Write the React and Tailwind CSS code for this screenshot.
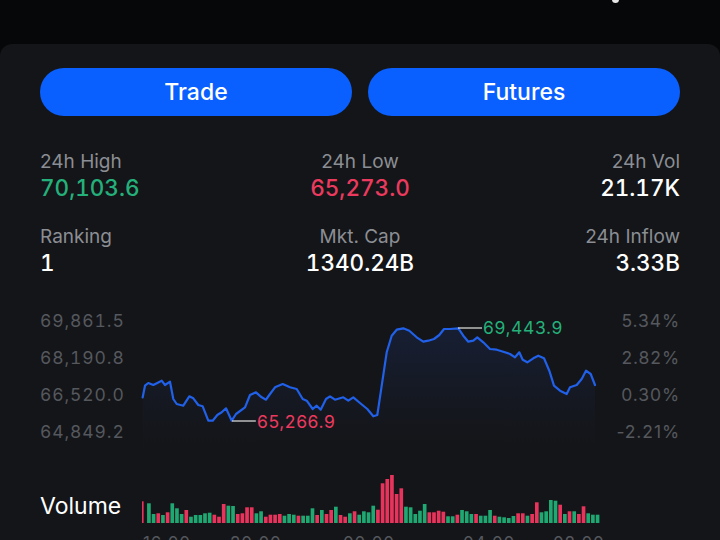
import React from "react";

const LINE = [
  [142.7, 398.3], [145, 386.7], [148.3, 384], [153.3, 386], [157.3, 384], [161.7, 381.7],
  [165, 386], [170, 382.7], [173.3, 400], [176.7, 405], [183.3, 406.7], [189.3, 397.3],
  [193.3, 399.3], [198.3, 406], [202.7, 407.3], [208.3, 421.7], [212.7, 421.7], [217.3, 416],
  [221.7, 413.3], [226, 409.3], [231.7, 421.7], [236, 415], [245, 408.3], [250, 396],
  [256, 393.3], [261.7, 398.3], [266, 400.7], [269.3, 396], [275, 388.3], [282.7, 385],
  [290, 388.3], [296.7, 390], [302.7, 400], [306.7, 401.7], [312.7, 410], [316.7, 406.7],
  [320.7, 410.7], [326, 400], [330, 397.3], [335, 400.7], [343.3, 398.3], [348.3, 401.7],
  [353.3, 398.3], [360, 404], [367.3, 410], [373.3, 417.3], [377.3, 416], [380.7, 393.3],
  [386.7, 353.3], [391.7, 336.7], [396.7, 330.7], [403.3, 329.3], [409.3, 331.7], [416.7, 338.3],
  [423.3, 342.7], [428.3, 341.7], [434, 340], [439.3, 336], [444, 330], [450, 330],
  [458.3, 329.3], [463.3, 336.7], [468.3, 342.7], [473.3, 341.7], [477.3, 338.3], [483.3, 343.3],
  [490, 350], [496.7, 350.7], [503.3, 352.7], [510, 355], [515, 358.3], [519.3, 353.3],
  [522.7, 360.7], [527.3, 363.3], [533.3, 359.3], [538.3, 356.7], [544, 359.3], [549.3, 371.7],
  [554, 386.7], [560, 391.7], [566.7, 395], [570, 388.3], [576.7, 386], [581.7, 380],
  [586, 371.7], [590.7, 375], [595, 386],
];

const VOL = "r21.7 g19.7 g9 r9.7 g8 r10.7 g19.7 g14.7 g9 r13 g6.3 g8 g8 g9.7 g10.3 r8.3 r6.3 r19 g17.3 g17 r9 r9.7 r15.7 r15.7 g9.7 g11.7 r6.3 r8.3 r8.3 r9 g7.3 g9 g8.3 r7.3 g7.3 g7.3 g14.7 r8 g13 r9 r13 g16.3 r8 r6.3 g9.7 r11.7 g8.3 g11.7 g10.7 g17.3 r13.3 r39.7 r44 r48 r29 r34.7 g16.3 g15.7 g9 g12.3 g19 r10.7 r10.7 r12.3 r11.3 g6.7 g6.7 r8.3 g13 g11.7 g9 r9 g7.3 g7.3 g13 r7.3 g6.3 g5.7 g5 g7 r9.7 r9.7 g7.3 r9 r20.7 g10.7 g11.7 g23 g22.3 r18.3 g9 r11.7 g11.7 r9 r16.7 g9.7 g8.3 g8.3"
  .split(" ")
  .map((s) => ({ c: s[0], h: parseFloat(s.slice(1)) }));

function Stat({ label, value, color, align }) {
  return (
    <div className={"flex flex-col " + align}>
      <span className="text-[19px] leading-[25px] text-[#8b8e94]">{label}</span>
      <span className={"text-[22.5px] leading-[28px] font-medium tabular-nums " + color}>{value}</span>
    </div>
  );
}

export default function App() {
  const line = LINE.map((p, i) => (i ? "L" : "M") + p[0] + " " + p[1]).join(" ");
  const area = line + " L595 450 L142.7 450 Z";
  const pitch = 458 / VOL.length;

  return (
    <div
      className="w-[720px] h-[540px] bg-[#060708] overflow-hidden flex flex-col relative"
      style={{ fontFamily: "Inter, 'Noto Sans', sans-serif" }}
    >
      <div className="h-[44px] shrink-0 relative">
        <div className="absolute left-[612px] top-[-4px] w-[7px] h-[7px] rounded-full bg-white/90" />
      </div>
      <div className="flex-1 bg-[#141518] rounded-t-[12px] px-10 pt-6 flex flex-col">
        <div className="flex gap-4">
          <button className="flex-1 h-12 rounded-full bg-[#0a60ff] text-white text-[23px] font-medium">Trade</button>
          <button className="flex-1 h-12 rounded-full bg-[#0a60ff] text-white text-[23px] font-medium">Futures</button>
        </div>

        <div className="grid grid-cols-3 mt-[33px] gap-y-[22px]">
          <Stat label="24h High" value="70,103.6" color="text-[#24b07a]" align="items-start" />
          <Stat label="24h Low" value="65,273.0" color="text-[#ec3a5f]" align="items-center" />
          <Stat label="24h Vol" value="21.17K" color="text-white" align="items-end" />
          <Stat label="Ranking" value="1" color="text-white" align="items-start" />
          <Stat label="Mkt. Cap" value="1340.24B" color="text-white" align="items-center" />
          <Stat label="24h Inflow" value="3.33B" color="text-white" align="items-end" />
        </div>

        <div className="flex mt-[25px] h-[150px] text-[17.5px] leading-[37px] text-[#55585e] tracking-[0.9px]">
          <div className="w-[102px] flex flex-col tabular-nums">
            <span>69,861.5</span>
            <span>68,190.8</span>
            <span>66,520.0</span>
            <span>64,849.2</span>
          </div>
          <svg width="458" height="150" viewBox="142 303 458 150" className="shrink-0 overflow-visible">
            <defs>
              <linearGradient id="fill" x1="0" y1="0" x2="0" y2="1">
                <stop offset="0" stopColor="#1f3a80" stopOpacity="0.26" />
                <stop offset="0.7" stopColor="#1f3a80" stopOpacity="0.06" />
                <stop offset="1" stopColor="#1f3a80" stopOpacity="0" />
              </linearGradient>
            </defs>
            <path d={area} fill="url(#fill)" />
            <path d={line} fill="none" stroke="#2160e8" strokeWidth="2.2" strokeLinejoin="round" strokeLinecap="round" />
            <line x1="232" y1="422" x2="256" y2="422" stroke="#e5e5e5" strokeWidth="1.2" />
            <text x="257" y="422" dominantBaseline="central" fill="#ec3a5f" fontSize="17.5" letterSpacing="0.6">65,266.9</text>
            <line x1="458" y1="329" x2="482" y2="329" stroke="#e5e5e5" strokeWidth="1.2" />
            <text x="483" y="328" dominantBaseline="central" fill="#24b07a" fontSize="17.5" letterSpacing="0.6">69,443.9</text>
          </svg>
          <div className="flex-1 flex flex-col items-end">
            <span>5.34%</span>
            <span>2.82%</span>
            <span>0.30%</span>
            <span>-2.21%</span>
          </div>
        </div>

        <div className="flex items-end mt-[21px] h-[50px]">
          <span className="w-[102px] text-[23px] leading-[28px] text-white pb-[3px]">Volume</span>
          <svg width="458" height="50" viewBox="0 0 458 50" className="shrink-0">
            {VOL.map((b, i) => (
              <rect
                key={i}
                x={i * pitch + (i === 0 ? 0 : 0.4)}
                y={50 - b.h}
                width={i === 0 ? 1.6 : pitch - 1}
                height={b.h}
                fill={b.c === "g" ? "#1fa872" : "#e8345c"}
              />
            ))}
          </svg>
        </div>

        <div className="relative h-[24px] mt-[8px] text-[17px] leading-[24px] text-[#55585e] tracking-[0.8px]">
          <span className="absolute left-[103px]">16:00</span>
          <span className="absolute left-[190px]">20:00</span>
          <span className="absolute left-[303px]">00:00</span>
          <span className="absolute left-[423px]">04:00</span>
          <span className="absolute left-[513px]">08:00</span>
        </div>
      </div>
    </div>
  );
}
